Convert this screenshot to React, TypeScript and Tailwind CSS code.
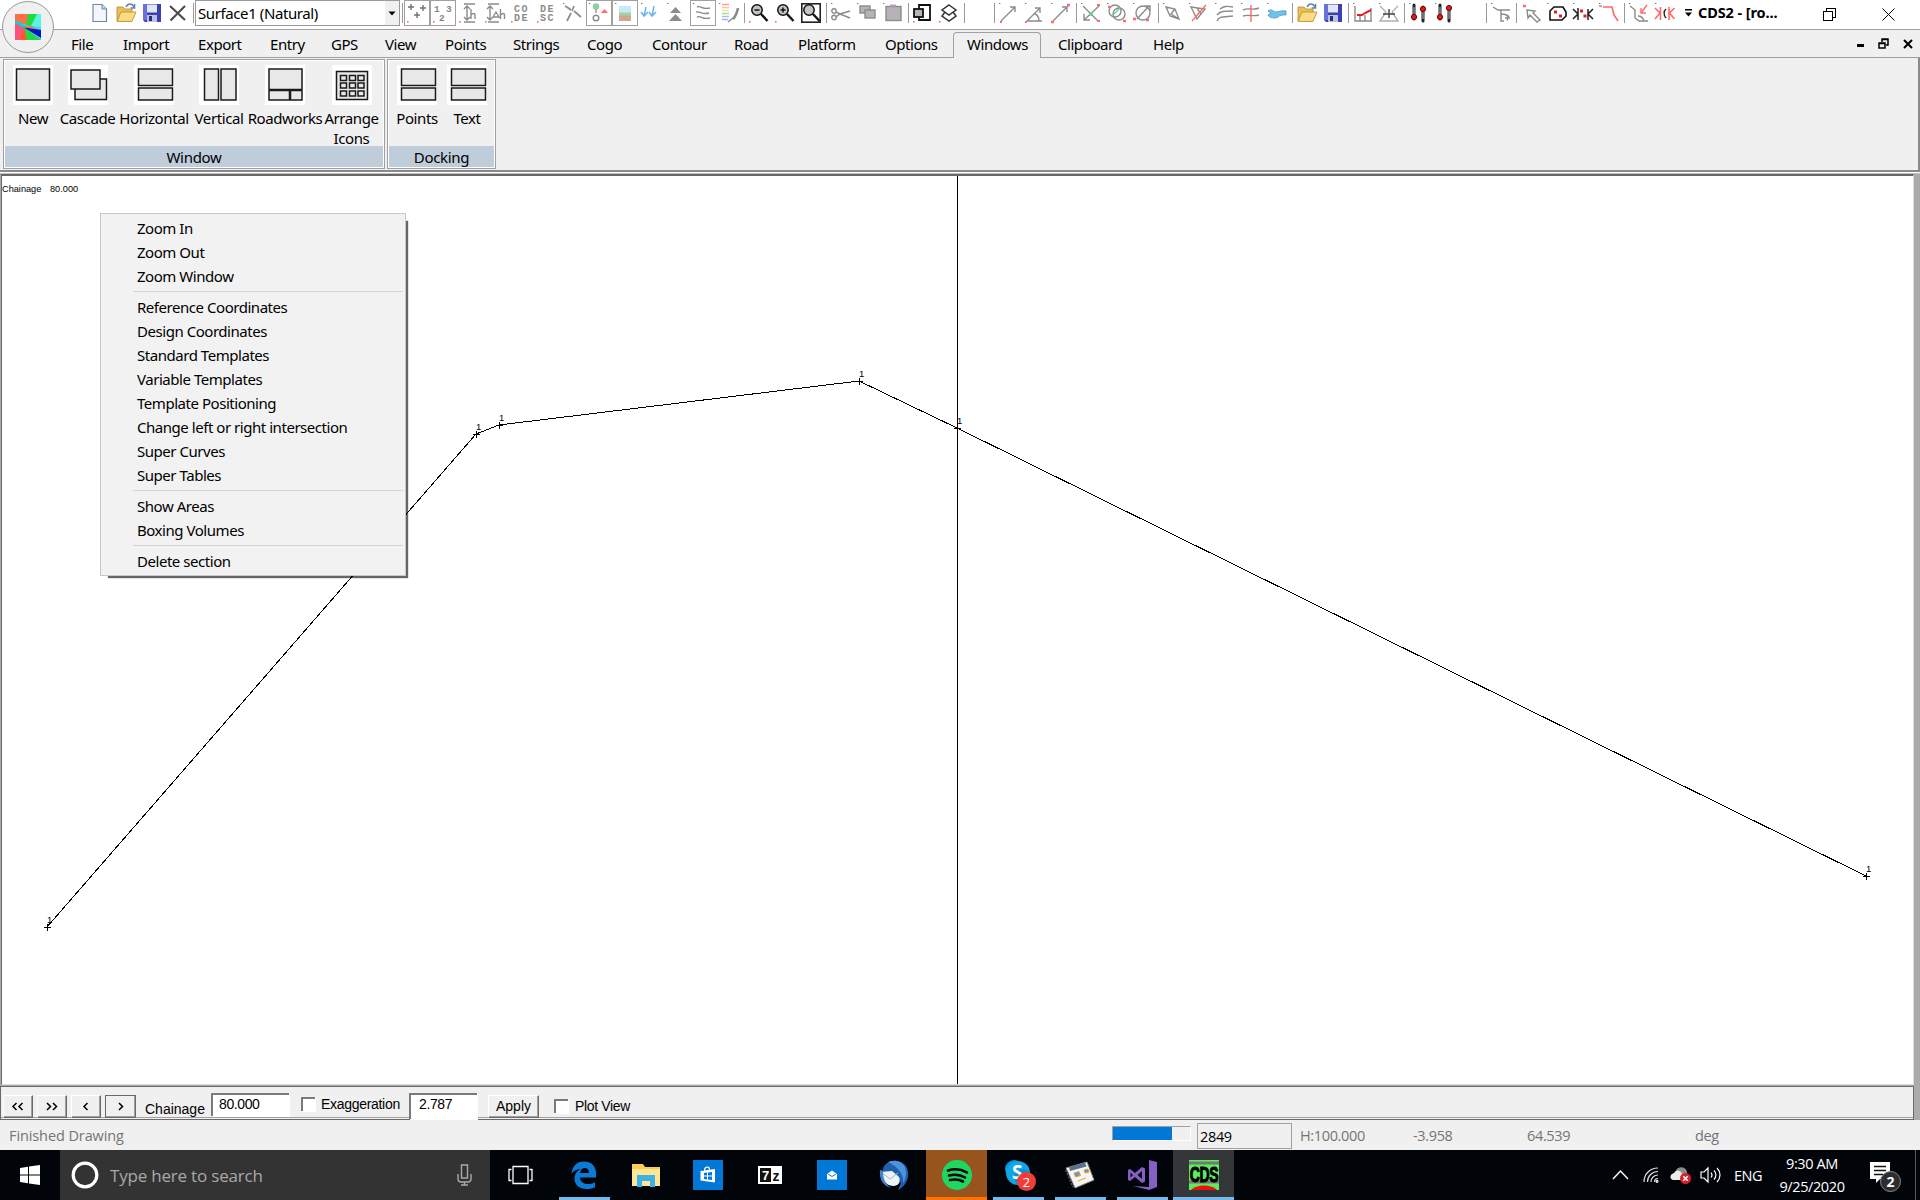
import type { ReactNode } from "react";
import { clsx } from "clsx";

interface BoxProps {
  children?: ReactNode;
  className?: string;
}

const RED = "#ff6b6b";
const GRAY = "#8c8c8c";

/* ---------- quick access toolbar ---------- */

const Tool = ({ children, boxed, dot }: { children?: ReactNode; boxed?: boolean; dot?: "top" | "bottom" }) => (
  <div className={clsx("flex h-[26px] w-[26px] shrink-0 items-center justify-center", boxed && "outline -outline-offset-1 outline-[#a0a0a0]")}>
    <svg className="overflow-visible" width="20" height="20" viewBox="0 0 20 20" fill="none" stroke={GRAY} strokeWidth="1.4">
      {dot === "bottom" && <rect x="0" y="18" width="1.6" height="1.6" fill={RED} stroke="none" />}
      {dot === "top" && <rect x="0" y="0" width="1.4" height="1" fill="#777" stroke="none" />}
      {children}
    </svg>
  </div>
);

const Sep = () => (
  <div className="flex h-[26px] w-1 shrink-0 items-center justify-center">
    <div className="h-5 w-px bg-[#9a9a9a]" />
  </div>
);

const OpenIcon = () => (
  <g stroke="#b98a2c" strokeWidth="0.8">
    <path d="M1 18V4h6l2 2h7v12z" fill="#e9bf5a" />
    <path d="M1 18.4 5 9h15l-4 9.4z" fill="#fbdc82" />
    <path d="M10 4c2-4 6-4 8 0M18.600 1v4h-4" stroke="#5c83a8" strokeWidth="1.4" />
  </g>
);

const SaveIcon = () => (
  <g stroke="none">
    <path d="M1 1h18v18H3l-2-2z" fill="#3c3fae" />
    <path d="M1 1h4v16H1z" fill="#6a70d8" />
    <rect x="5" y="1.500" width="10" height="8" fill="#dfe6f8" />
    <rect x="5" y="12" width="10" height="7" fill="#b9c2e6" />
    <rect x="7" y="13" width="3" height="5" fill="#2b2d7a" />
  </g>
);

const SmallText = ({ a, b }: { a: string; b: string }) => (
  <g fill="#8c8c8c" stroke="none" fontFamily="Liberation Mono, monospace" fontSize="10" fontWeight="700" letterSpacing="1.500">
    <text x="3" y="8.500">{a}</text>
    <text x="3" y="17.500">{b}</text>
  </g>
);

const Magnifier = ({ sign }: { sign?: string }) => (
  <g stroke="#111">
    <circle cx="8" cy="7" r="5.200" fill="#c4c4c4" strokeWidth="1.500" />
    <path d="m12 11 6.500 7" strokeWidth="2.400" />
    {sign && <path d={sign} strokeWidth="1.500" />}
  </g>
);

const Thermometers = ({ flip }: { flip?: boolean }) => (
  <g>
    <path d="M5 2v14M14 4v14" stroke="#222" strokeWidth="3" strokeLinecap="round" />
    <path d="M5 4v11M14 6v10" stroke="#bbb" strokeWidth="1" />
    <circle cx="5" cy="14" r="2.600" fill="#d81e1e" stroke="#700" strokeWidth="1" />
    <circle cx="14" cy={flip ? 5 : 6} r="2.600" fill="#d81e1e" stroke="#700" strokeWidth="1" />
  </g>
);

const TitleBar = () => (
  <div className="flex h-[29px] bg-white pl-[87px]">
    <Tool>
      <path d="M3 1.500h9l4.500 4.500v12.500H3z" fill="#f3f7fc" stroke="#7189a5" strokeWidth="1.200" />
      <path d="M12 1.500v4.500h4.500" stroke="#7189a5" fill="#c9d8ea" strokeWidth="1" />
    </Tool>
    <Tool><OpenIcon /></Tool>
    <Tool><SaveIcon /></Tool>
    <Tool><path d="m2 3 15 14M17 3 2.500 17.500" stroke="#4b4b4b" strokeWidth="2.100" /></Tool>
    <Sep />
    <div className="flex h-[26px] w-[205px] shrink-0 items-center border border-[#9a9a9a] bg-white pl-0.5">
      <span className="flex-1 whitespace-nowrap text-[15px] leading-6 tracking-[-0.4px]">Surface1 (Natural)</span>
      <span className="flex h-full w-[14px] items-center justify-center bg-[#f0f0f0]">
        <svg width="8" height="5" viewBox="0 0 8 5"><path d="M0.500 0.500h7L4 4.500z" /></svg>
      </span>
    </div>
    <Sep />
    <Tool boxed dot="bottom"><path d="M1 4h6M4 1v6M13 5h6M16 2v6M7 12h6M10 9v6" stroke="#707070" /></Tool>
    <Tool boxed dot="bottom">
      <g fill="#858585" stroke="none" fontFamily="Liberation Mono, monospace" fontSize="9.500" fontWeight="700">
        <text x="1" y="9">1</text>
        <text x="13" y="9">3</text>
        <text x="6" y="17.500">2</text>
      </g>
    </Tool>
    <Tool dot="bottom">
      <path d="M5 1h11M5 19h11M8 3v14M5 6l3-3 3 3M5 14l3 3 3-3M12 6v10M12 12c2-2 4-2 4 0v4" />
    </Tool>
    <Tool dot="bottom">
      <path d="M3 1h11M3 19h11M5 3v14M2 6l3-3 3 3M2 14l3 3 3-3M8 14l3-5 3 5zM15.500 6v10M15.500 12c2-2 4-2 4 0v4" />
    </Tool>
    <Tool dot="bottom"><SmallText a="CO" b="DE" /></Tool>
    <Tool dot="bottom"><SmallText a="DE" b="SC" /></Tool>
    <Tool dot="top"><path d="m2 3 5 3M11 3 9 8M8 10 4 18M11 8l7 6M5 5l3 2" strokeWidth="1.700" /></Tool>
    <Tool boxed dot="top">
      <circle cx="7" cy="3.500" r="3.200" fill="#8fcfa0" stroke="none" />
      <path d="M7 6v4" stroke="#b09060" />
      <circle cx="7" cy="15" r="2.800" />
      <path d="m12 10 3.500-4 3.500 4z" fill={RED} stroke="none" />
    </Tool>
    <Tool boxed dot="top">
      <g stroke="none">
        <rect x="4" y="3" width="12" height="15" fill="#c7e9f7" />
        <rect x="4" y="12" width="12" height="6" fill="#cfa893" />
        <rect x="4" y="9.500" width="12" height="3" fill="#9fd3a5" />
      </g>
    </Tool>
    <Tool dot="top"><path d="M5 4 3 13M0 9l3 4 4-4M13 3l-2 10M8 9l3 4 4-4" stroke="#6ab4ee" strokeWidth="1.500" /></Tool>
    <Tool dot="top"><path d="m3 10 5.500-6L14 10zM2 18l6.500-7 6.500 7z" fill="#8c8c8c" stroke="none" /></Tool>
    <Tool boxed dot="top">
      <path d="M4 4c4-2 5 3 13 1M3 9c4-1 6 3 13 1M4 14c4-2 5 3 13 1" />
    </Tool>
    <Tool dot="top">
      <g strokeWidth="1.500">
        <path d="M3 1.500h7" stroke="#ff9aa0" />
        <path d="M3 4.500h7" stroke="#ffc4a0" />
        <path d="M3 7.500h7" stroke="#f0e68c" />
        <path d="M3 10.500h7" stroke="#a0e0a0" />
        <path d="M3 13.500h7" stroke="#90c8f0" />
        <path d="M3 16.500h6" stroke="#c0a0f0" />
        <path d="M19 5c-1 5-2 8-5 11" stroke="#888" strokeWidth="2.500" />
        <path d="m14 15-5 4" stroke="#888" />
      </g>
    </Tool>
    <Sep />
    <Tool dot="bottom"><Magnifier sign="M5.500 7h5" /></Tool>
    <Tool dot="bottom"><Magnifier sign="M5.500 7h5M8 4.500v5" /></Tool>
    <Tool>
      <rect x="0.800" y="0.800" width="18.400" height="18.400" stroke="#222" strokeWidth="1.600" />
      <Magnifier />
    </Tool>
    <Sep />
    <Tool dot="top">
      <circle cx="3" cy="8" r="2.200" />
      <circle cx="3" cy="14.500" r="2.200" />
      <path d="m5 9 4 2 10 4M5 14l4-3 10-3" />
    </Tool>
    <Tool dot="top">
      <rect x="3" y="3" width="10" height="7" fill="#b4b4b4" />
      <rect x="8" y="7" width="10" height="8" fill="#b4b4b4" />
    </Tool>
    <Tool dot="top">
      <rect x="3" y="3.500" width="15" height="14" fill="#b4b4b4" />
      <path d="M7 2.500h6" stroke="#c49ac8" strokeWidth="2" />
    </Tool>
    <Sep />
    <Tool dot="bottom">
      <path d="M6 2h11v15H6z" stroke="#111" strokeWidth="1.800" />
      <rect x="1" y="6" width="9" height="8" fill="#b4b4b4" stroke="#111" strokeWidth="1.800" />
    </Tool>
    <Tool dot="bottom">
      <path d="m10 2 7 5-7 5-7-5zM6 9l-3 4 7 5 7-5-3-4" stroke="#333" strokeWidth="1.500" />
    </Tool>
    <Sep />
    <div className="w-[26px] shrink-0" />
    <Sep />
    <Tool dot="top"><path d="M2 18 16 4M11 4h5v5" /><path d="M1 19h2" stroke={RED} strokeWidth="2" /></Tool>
    <Tool dot="top"><path d="M2 18 15 5M10 5h5v5M2 18h15M10 11c3 1 4 4 4 7" /><path d="M0 19h2" stroke={RED} strokeWidth="2" /></Tool>
    <Tool dot="top"><path d="M2 18 17 3M11 4h5v5" /><path d="M0 19h3M16 2h3" stroke={RED} strokeWidth="2.500" /></Tool>
    <Sep />
    <Tool dot="top">
      <path d="M2 3l15 15M18 3 3 17M3 11v6h6" />
      <circle cx="10" cy="11" r="2" fill="#6fd08c" stroke="none" />
      <path d="M16 2h3M16 18h3" stroke={RED} strokeWidth="2.200" />
    </Tool>
    <Tool dot="top">
      <circle cx="8" cy="8" r="6" />
      <circle cx="12" cy="11" r="6" />
      <path d="m6 12 7-7" stroke="#6fd08c" />
      <path d="M1 4h2M16 18h3" stroke={RED} strokeWidth="2.400" />
    </Tool>
    <Tool dot="top">
      <circle cx="10" cy="10" r="7" />
      <path d="M4 16 16 3M12 3h5v5" />
      <path d="M0 16h3M13 17h3" stroke={RED} strokeWidth="2.400" />
    </Tool>
    <Sep />
    <Tool dot="top"><path d="m3 4 9 2 4 10-9-3zM3 4l4 9M12 6l-4 5 8 5" /></Tool>
    <Tool dot="top"><path d="m2 4 14 2-8 10zM8 5l4 6" /><path d="M17 2 3 18" stroke={RED} /></Tool>
    <Tool dot="top"><path d="M2 18c2-5 6-4 16-5M2 12c3-4 7-4 16-4M5 6c4-3 7-3 13-2" /></Tool>
    <Tool dot="top"><path d="M2 7c6-3 9 1 16-2M2 13c6-2 9 1 16-1" /><path d="M10 2v17" stroke={RED} /></Tool>
    <Tool dot="top">
      <path d="M1 8c3-3 6 1 8 1s5-2 10-1v4c-4 0-6 0-8 2s-9 1-10-2l3-2z" fill="#6cc3ee" stroke="#4a9ac0" strokeWidth="0.800" />
    </Tool>
    <Sep />
    <Tool><OpenIcon /></Tool>
    <Tool><SaveIcon /></Tool>
    <Sep />
    <Tool dot="top">
      <path d="M2 3v15h17M7 18v-6M12 18v-6M18 18V5" />
      <path d="M4 12h5l3-2 6-3" stroke="#e02020" strokeWidth="2" />
    </Tool>
    <Tool dot="top"><path d="m1 3 6 6M19 3l-6 6M7 9l-6 9h18l-6-9" stroke="#b0b0b0" /><path d="M4 11h12M10 6v9" stroke="#444" /></Tool>
    <Sep />
    <Tool dot="top"><Thermometers /></Tool>
    <Tool dot="top"><Thermometers flip /></Tool>
    <div className="w-[26px] shrink-0" />
    <Sep />
    <Tool dot="top"><path d="m2 4 5 3h12M10 7v11h3M10 11c3 0 6 0 8 3" /><path d="M14 15h5M16.500 12.500v5" /></Tool>
    <Sep />
    <Tool><path d="M2 3h3" stroke={RED} strokeWidth="2.500" /><path d="m6 7 8 1-2 2 7 7-3 2-7-7-2 3z" /></Tool>
    <Tool dot="top">
      <path d="M3 17V8l4-4h9l3 5v4l-4 4z" stroke="#111" strokeWidth="1.600" />
      <path d="M7 9h3M12 13h3" stroke="#e02020" strokeWidth="3" />
    </Tool>
    <Tool dot="top">
      <path d="M0 6l5 5-5 5M5 5v12M15 6v11M20 6l-5 5 5 5" stroke="#222" strokeWidth="1.500" />
      <path d="M7 8h3M10.500 13h3" stroke="#e02020" strokeWidth="2.800" />
    </Tool>
    <Tool dot="top"><path d="M0 3h3" /><path d="M4 4h9l2 8 4 6" stroke={RED} strokeWidth="1.700" /></Tool>
    <Sep />
    <Tool dot="top"><path d="m1 3 5 4v8l4 3h9M9 13c3 0 5 2 6 5" /><path d="m18 2-6 8M12 5v5h5" stroke={RED} /></Tool>
    <Tool dot="top">
      <path d="m0 5 5 5-5 6M5.500 4v13M14 4v13M19.500 5l-5 5 5 6" stroke={RED} strokeWidth="1.600" />
      <path d="M11 6c-2.500 2-2.500 6 0 9" stroke="#222" />
    </Tool>
    <div className="flex h-[26px] w-[20px] shrink-0 items-center pl-[7px]">
      <svg width="7" height="8" viewBox="0 0 7 8"><path d="M0 0h7v1.500H0zM0 3.500h7L3.500 7.500z" /></svg>
    </div>
    <span className="w-[83px] shrink-0 whitespace-nowrap pt-px text-[14.5px] font-bold leading-[23px] tracking-[-0.1px]">CDS2 - [ro...</span>
    <div className="flex flex-1 items-center pl-[42px]">
      <svg width="13" height="13" viewBox="0 0 13 13" fill="none" stroke="#000" shapeRendering="crispEdges">
        <path d="M0.500 3.500h9v9h-9zM3.500 3V0.500h9v9H10" />
      </svg>
      <svg className="ml-[46px]" width="13" height="13" viewBox="0 0 13 13" stroke="#000"><path d="m0.500 0.500 12 12M12.500 0.500l-12 12" /></svg>
    </div>
  </div>
);

/* ---------- menu tabs ---------- */

const TABS = [
  { label: "File", cls: "w-[52px]" },
  { label: "Import", cls: "w-[75px]" },
  { label: "Export", cls: "w-[72px]" },
  { label: "Entry", cls: "w-[61px]" },
  { label: "GPS", cls: "w-[54px]" },
  { label: "View", cls: "w-[60px]" },
  { label: "Points", cls: "w-[68px]" },
  { label: "Strings", cls: "w-[74px]" },
  { label: "Cogo", cls: "w-[65px]" },
  { label: "Contour", cls: "w-[82px]" },
  { label: "Road", cls: "w-[64px]" },
  { label: "Platform", cls: "w-[87px]" },
  { label: "Options", cls: "w-[82px]" },
  { label: "Windows", cls: "w-[88px]", active: true },
  { label: "Clipboard", cls: "w-[95px] ml-[3px]" },
  { label: "Help", cls: "w-[61px]" },
];

const MenuTabs = () => (
  <div className="flex h-[29px] border-b border-t border-[#a0a0a0] bg-[#f0f0f0] pl-[57px]">
    {TABS.map((tab) => (
      <div
        key={tab.label}
        className={clsx(
          "shrink-0 whitespace-nowrap text-[15px] tracking-[-0.45px]",
          tab.cls,
          tab.active
            ? "-mb-px mt-0.5 h-[26px] rounded-t border border-b-0 border-[#a0a0a0] bg-[#f0f0f0] pl-[13px] leading-[22px]"
            : "pl-[14px] leading-[28px]"
        )}
      >
        {tab.label}
      </div>
    ))}
    <div className="flex flex-1 items-center justify-end gap-[14px] pr-[7px]">
      <span className="mt-1 h-[3px] w-[7px] bg-black" />
      <svg width="11" height="11" viewBox="0 0 11 11" fill="none" stroke="#000" strokeWidth="1.500">
        <path d="M1 5h6v5H1zM1 5.500h6M4 4V1h6v6H8M4 1.500h6" />
      </svg>
      <svg width="10" height="10" viewBox="0 0 10 10" stroke="#000" strokeWidth="2"><path d="m1 1 8 8M9 1 1 9" /></svg>
    </div>
  </div>
);

/* ---------- ribbon ---------- */

const WindowIcon = ({ children }: BoxProps) => (
  <svg className="shrink-0 bg-white" width="40" height="40" viewBox="0 0 40 40" fill="#e8e8e8" stroke="#1a1a1a" strokeWidth="1.500">
    {children}
  </svg>
);

const SplitIcon = () => (
  <WindowIcon>
    <path d="M4.500 4h34v16.500h-34zM4.500 23h34v12h-34z" />
  </WindowIcon>
);

const RibbonButton = ({ icon, label, className }: { icon: ReactNode; label: string; className: string }) => (
  <div className={clsx("flex shrink-0 flex-col items-center pt-1", className)}>
    {icon}
    <span className="mt-[3px] text-center text-[15px] leading-5 tracking-[-0.4px]">{label}</span>
  </div>
);

const RibbonGroup = ({ title, children, className }: BoxProps & { title: string }) => (
  <div className={clsx("flex h-[110px] shrink-0 flex-col border border-[#a0a0a0] p-px shadow-[inset_0_0_0_1px_#fff]", className)}>
    <div className="flex h-[85px] shrink-0 pl-[3px]">{children}</div>
    <div className="h-[21px] shrink-0 bg-[#bfcddb] text-center text-[15px] leading-[22px] tracking-[-0.3px]">{title}</div>
  </div>
);

const Ribbon = () => (
  <div className="flex h-[114px] border-b-2 border-r-2 border-[#8a8a8a] bg-[#f0f0f0] pl-[3px] pt-px">
    <RibbonGroup title="Window" className="w-[382px]">
      <RibbonButton className="w-[50px]" label="New" icon={<WindowIcon><path d="M3.500 4h33v31h-33z" /></WindowIcon>} />
      <RibbonButton
        className="w-[59px]"
        label="Cascade"
        icon={<WindowIcon><path d="M7 14h31.500v20.500H7z" /><path d="M3 5h29v19H3z" /></WindowIcon>}
      />
      <RibbonButton className="w-[74px]" label="Horizontal" icon={<SplitIcon />} />
      <RibbonButton
        className="w-[56px]"
        label="Vertical"
        icon={<WindowIcon><path d="M5.500 4h14v31h-14zM22 4h15v31H22z" /></WindowIcon>}
      />
      <RibbonButton
        className="w-[76px]"
        label="Roadworks"
        icon={<WindowIcon><path d="M4 4h33v31H4z" /><path d="M4 25h33M25 25v10" strokeWidth="2.500" /></WindowIcon>}
      />
      <RibbonButton
        className="w-[57px]"
        label="Arrange Icons"
        icon={
          <WindowIcon>
            <path d="M4.500 6.500h31v28h-31z" />
            <path d="M8.500 10.500h6v5h-6zM17.500 10.500h6v5h-6zM26 10.500h6v5h-6zM8.500 18h6v5h-6zM17.500 18h6v5h-6zM26 18h6v5h-6zM8.500 26h6v5h-6zM17.500 26h6v5h-6zM26 26h6v5h-6z" />
          </WindowIcon>
        }
      />
    </RibbonGroup>
    <RibbonGroup title="Docking" className="ml-[2px] w-[109px]">
      <RibbonButton className="w-[50px]" label="Points" icon={<SplitIcon />} />
      <RibbonButton className="w-[50px]" label="Text" icon={<SplitIcon />} />
    </RibbonGroup>
  </div>
);

/* ---------- cross section ---------- */

// section vertices in canvas pixels
const POINTS = [
  [45, 751],
  [474, 258],
  [497, 249],
  [857, 205],
  [955, 252],
  [1864, 700],
];

const MENU = [
  ["Zoom In", "Zoom Out", "Zoom Window"],
  [
    "Reference Coordinates",
    "Design Coordinates",
    "Standard Templates",
    "Variable Templates",
    "Template Positioning",
    "Change left or right intersection",
    "Super Curves",
    "Super Tables",
  ],
  ["Show Areas", "Boxing Volumes"],
  ["Delete section"],
];

const ContextMenu = () => (
  <div className="absolute left-[98px] top-[37px] h-[363px] w-[306px] border border-[#c8c8c8] bg-[#f2f2f2] py-[3px] shadow-[5px_5px_1px_-3px_rgba(0,0,0,0.6)]">
    {MENU.map((group, i) => (
      <div key={i}>
        {i > 0 && <div className="mb-1 ml-8 mr-0.5 mt-0.5 h-px bg-[#d4d4d4]" />}
        {group.map((item) => (
          <div key={item} className="h-6 whitespace-nowrap pl-9 text-[15px] leading-[23px] tracking-[-0.46px]">
            {item}
          </div>
        ))}
      </div>
    ))}
  </div>
);

const SectionView = () => (
  <div className="flex h-[912px] bg-[#ababab] pl-px">
    <div className="relative h-[911px] w-[1913px] border-b border-l border-r border-t-2 border-[#686868] border-b-[#dcdcdc] border-r-[#dcdcdc] bg-white">
      <svg className="block" width="1911" height="908" viewBox="0 0 1911 908" shapeRendering="crispEdges">
        <path d="M955.500 0v908" stroke="#000" />
        <polyline points={POINTS.map((p) => p.join(",")).join(" ")} fill="none" stroke="#000" />
        {POINTS.map(([x, y]) => (
          <g key={x}>
            <path d={`M${x - 3} ${y + 0.5}h7M${x + 0.5} ${y - 3}v7`} stroke="#000" />
            <text x={x} y={y - 4} fontSize="9.500" fontFamily="Liberation Sans, Arial, sans-serif">1</text>
          </g>
        ))}
        <g fontSize="9.200" fontFamily="Liberation Sans, Arial, sans-serif">
          <text x="0" y="16">Chainage</text>
          <text x="48" y="16">80.000</text>
        </g>
      </svg>
      <ContextMenu />
    </div>
  </div>
);

/* ---------- section toolbar ---------- */

const RaisedButton = ({ children, className }: BoxProps) => (
  <div
    className={clsx(
      "flex h-[23px] shrink-0 items-center justify-center border border-b-[#696969] border-l-white border-r-[#696969] border-t-white shadow-[inset_-1px_-1px_0_#a0a0a0]",
      className
    )}
  >
    {children}
  </div>
);

const Sunken = ({ children, className }: BoxProps) => (
  <div
    className={clsx(
      "shrink-0 border-l-2 border-t-2 border-l-[#7a7a7a] border-t-[#7a7a7a] bg-white shadow-[1px_1px_0_#fff]",
      className
    )}
  >
    {children}
  </div>
);

// the step buttons use short drawn chevrons
const Step = ({ d, className }: { d: string; className?: string }) => (
  <RaisedButton className={clsx("mt-2", className)}>
    <svg width="14" height="9" viewBox="0 0 14 9" fill="none" stroke="#000" strokeWidth="1.500">
      <path d={d} />
    </svg>
  </RaisedButton>
);

const SectionToolbar = () => (
  <div className="flex h-[34px] bg-[#ababab]">
    <div className="flex w-[1914px] items-start border-l border-r border-t border-[#696969] bg-[#f0f0f0] pl-[2px] font-['Liberation_Sans',Arial,sans-serif] text-[14px] tracking-[-0.4px] shadow-[inset_0_-1px_0_#696969,inset_0_-2px_0_#f0f0f0,inset_0_-3px_0_#a0a0a0]">
      <Step className="w-[30px]" d="M5.500 1 2 4.500 5.500 8M11.500 1 8 4.500 11.500 8" />
      <Step className="ml-1 w-[30px]" d="M2 1l3.500 3.500L2 8M8 1l3.500 3.500L8 8" />
      <Step className="ml-1 w-[30px]" d="M8.500 1 5 4.500 8.500 8" />
      <Step className="ml-1 w-[31px] outline -outline-offset-1 outline-[#696969]" d="M5 1l3.500 3.500L5 8" />
      <span className="ml-[9px] w-[66px] pt-[12px] tracking-[0px]">Chainage</span>
      <Sunken className="mt-[6px] h-[23px] w-[78px] pl-[6px] leading-[19px]">80.000</Sunken>
      <Sunken className="ml-[12px] mt-[10px] h-[14px] w-[14px]" />
      <span className="ml-[6px] w-[82px] pt-[7px] tracking-[-0.3px]">Exaggeration</span>
      <Sunken className="ml-[6px] mt-[6px] h-[26px] w-[68px] pl-[8px] leading-[19px]">2.787</Sunken>
      <RaisedButton className="ml-[11px] mt-2 w-[51px] tracking-[0px]">Apply</RaisedButton>
      <Sunken className="ml-[15px] mt-[12px] h-[14px] w-[14px]" />
      <span className="ml-[7px] pt-[9px] tracking-[-0.35px]">Plot View</span>
    </div>
  </div>
);

const StatusBar = () => (
  <div className="flex h-[30px] items-center bg-[#f0f0f0] pt-px font-['Open_Sans',sans-serif] text-[14.5px] tracking-[-0.35px] text-[#757575]">
    <span className="w-[1112px] pl-[9px] tracking-[-0.1px]">Finished Drawing</span>
    <div className="-mt-1 h-[15px] w-[79px] border border-b-white border-l-[#a0a0a0] border-r-white border-t-[#a0a0a0]">
      <div className="h-full w-[59px] bg-[#0078d7]" />
    </div>
    <div className="ml-[6px] h-[26px] w-[95px] border border-[#a0a0a0] pl-0.5 leading-[25px] text-black">2849</div>
    <span className="ml-[8px] w-[113px]">H:100.000</span>
    <span className="w-[114px]">-3.958</span>
    <span className="w-[168px]">64.539</span>
    <span>deg</span>
  </div>
);

/* ---------- taskbar ---------- */

const TaskApp = ({ children, running, className }: BoxProps & { running?: boolean }) => (
  <div className={clsx("flex h-full w-[62px] shrink-0 flex-col items-center", className)}>
    <div className="flex flex-1 items-center pt-[3px]">{children}</div>
    <div className={clsx("h-[3px] w-[51px]", running && "bg-[#76b9ed]")} />
  </div>
);

const Taskbar = () => (
  <div className="flex h-[50px] bg-[#010409] font-['Open_Sans',sans-serif] text-white">
    <div className="flex w-[60px] items-center justify-center">
      <svg width="20" height="20" viewBox="0 0 20 20" fill="#fff">
        <path d="M0 3l8-1.200v7.700H0zM9 1.600 20 0v9.500H9zM0 10.500h8v7.700L0 17zM9 10.500h11V20L9 18.400z" />
      </svg>
    </div>
    <div className="flex w-[430px] items-center bg-[#333334] pl-[11px]">
      <svg width="28" height="28" viewBox="0 0 28 28"><circle cx="14" cy="14" r="11.800" fill="none" stroke="#fff" strokeWidth="3.200" /></svg>
      <span className="ml-[11px] flex-1 pt-px text-[17px] tracking-[-0.2px] text-[#a9a9a9]">Type here to search</span>
      <svg className="mr-[18px]" width="15" height="22" viewBox="0 0 15 22" fill="none" stroke="#a9a9a9" strokeWidth="1.400">
        <path d="M4.500 1h6v13h-6zM1 10v5c0 2 1 3 3 3h7c2 0 3-1 3-3v-5M7.500 18v3M4 21h7" />
      </svg>
    </div>
    <div className="flex w-[60px] items-center justify-center">
      <svg width="25" height="20" viewBox="0 0 25 20" fill="none" stroke="#fff" strokeWidth="1.300">
        <path d="M5 1.500h15v17H5zM3.500 4.500H1v11h2.500M21.500 4.500H24v11h-2.500" />
      </svg>
    </div>
    <TaskApp className="ml-[3px]" running>
      <svg width="26" height="28" viewBox="0 0 26 28" fill="#0b7bd8">
        <path d="M0.500 13C1 5 6 0.500 13 0.500 21 0.500 25 6 25 12v4.500H9c0 4 3.500 6.500 8 6.500 3 0 5.500-.8 7-1.800v5C22 27.300 19 28 15.500 28 8 28 3.500 23.500 3.500 17.500c0-4.500 2.500-8 6.500-9.500-5 .2-8 2-9.500 5zM9.200 12H18c0-3-1.500-5-4.200-5S9.500 9 9.200 12z" />
      </svg>
    </TaskApp>
    <TaskApp>
      <svg width="28" height="24" viewBox="0 0 28 24">
        <path d="M0 1h11l2 3h15v19H0z" fill="#f9cd57" />
        <path d="M0 6h28v17H0z" fill="#ffe694" />
        <path d="M5 24V12h18v12h-5v-6h-8v6z" fill="#3db2e6" />
      </svg>
    </TaskApp>
    <TaskApp>
      <svg width="30" height="30" viewBox="0 0 30 30">
        <path fill="#0078d7" d="M0 0h30v30H0z" />
        <path d="M7.500 11 22 9v13.500L7.500 20.500zM11 11V9.500c0-3.500 6-4 6-.5v1.500h-1.300V9c0-2-3.400-1.500-3.400.5V11z" fill="#fff" />
        <path d="m11 13 3-.4v2.900h-3zM15 12.500l4-.5v3.500h-4zM11 16.500h3v2.900l-3-.4zM15 16.500h4V20l-4-.5z" fill="#0078d7" />
      </svg>
    </TaskApp>
    <TaskApp>
      <svg width="24" height="18" viewBox="0 0 24 18">
        <path fill="#fff" d="M0 0h24v18H0z" />
        <path fill="#111" d="M2 2h11v14H2z" />
        <g fontFamily="Liberation Sans, sans-serif" fontWeight="700">
          <text x="4" y="14" fontSize="13" fill="#fff">7</text>
          <text x="14.500" y="15" fontSize="14" fill="#111">z</text>
        </g>
      </svg>
    </TaskApp>
    <TaskApp>
      <svg width="30" height="30" viewBox="0 0 30 30">
        <path fill="#0078d7" d="M0 0h30v30H0z" />
        <path d="M10 14l5-3.500 5 3.500v5.500H10z" fill="#fff" />
        <path d="m11 14 4 2.500 4-2.500" stroke="#0078d7" fill="none" />
      </svg>
    </TaskApp>
    <TaskApp>
      <svg width="30" height="30" viewBox="0 0 30 30">
        <path d="M5 6C10-1 22-1 27 6c5 9 1 20-8 24 2-4 3-6 2-10L3 12z" fill="#1f5fae" />
        <path d="M9 2c8-3 14 0 17 5 2 6 1 12-2 16 1-9-5-16-15-21z" fill="#4b93dc" />
        <path d="M2 12c2 10 6 14 13 14 5-1 7-4 5-9l-7-6z" fill="#eef2f7" />
        <path d="m2 12 9 7 8-6" fill="none" stroke="#a7b5c6" />
        <path d="M1 10c-1 9 3 16 11 18-6-4-8-10-8-17z" fill="#3f86cf" />
      </svg>
    </TaskApp>
    <div className="ml-px flex h-full w-[61px] shrink-0 items-center justify-center border-b-[3px] border-[#ff7200] bg-[#98541d] pt-[3px]">
      <svg width="30" height="30" viewBox="0 0 30 30">
        <circle cx="15" cy="15" r="15" fill="#1ed760" />
        <path d="M6 10.500c6-2 13-1.500 19 2M7 15.500c6-1.500 11-1 16 2M8 20c5-1 9-.8 13 1.500" fill="none" stroke="#000" strokeWidth="2.600" strokeLinecap="round" />
      </svg>
    </div>
    <TaskApp running>
      <svg className="ml-[5px]" width="34" height="34" viewBox="0 0 34 34">
        <circle cx="10" cy="11" r="9" fill="#0a8fd8" />
        <circle cx="14" cy="15" r="12" fill="#12a5e8" />
        <circle cx="19" cy="20" r="9" fill="#0a8fd8" />
        <text x="8" y="21" fontSize="19" fontWeight="700" fill="#fff">S</text>
        <circle cx="22.500" cy="23.500" r="9.500" fill="#f03e36" />
        <text x="18.500" y="28.500" fontSize="13.500" fill="#fff">2</text>
      </svg>
    </TaskApp>
    <TaskApp running>
      <svg width="30" height="28" viewBox="0 0 30 26">
        <path d="M1 6 22 0l7 18-19 8z" fill="#f4f4f2" stroke="#888" />
        <path d="M4 5 20 .5l1.500 4L5 9z" fill="#5b6f8f" />
        <path d="m9 11 5-1.500 1.500 4L10.500 15zM19 8l4-1 1 3-4 1zM13 19l8-3" fill="#4f9de0" stroke="#f0a030" />
        <path d="M1 8 8 25" stroke="#555" strokeWidth="2" strokeDasharray="2 1.500" />
      </svg>
    </TaskApp>
    <TaskApp running>
      <svg className="ml-px" width="30" height="30" viewBox="0 0 30 30" fill="#865fc5">
        <path d="m21 0 8 2v25l-8 3L5 26l16 1z" />
        <path d="m0 10 2-1 5 4 7-6 3 1.500v13L14 23l-7-6-5 4-2-1zm2.500 2.500v5l2.500-2.500zm7 2.500 4.500 4v-8z" fillRule="evenodd" />
      </svg>
    </TaskApp>
    <div className="flex h-full w-[61px] shrink-0 items-center justify-center border-b-[3px] border-[#76b9ed] bg-[#343639] pt-[3px]">
      <svg className="overflow-visible" width="30" height="30" viewBox="0 0 30 30">
        <path fill="#5bef5b" d="M0 0h30v30H0z" />
        <path d="M0 3h30M0 22h30" stroke="#777" strokeWidth="3" />
        <g transform="scale(0.640 1)">
          <text x="1" y="22" fontSize="22" fontWeight="700" fontFamily="Liberation Sans, sans-serif" letterSpacing="-0.500" fill="#000" stroke="#000">CDS</text>
        </g>
        <path d="M2 30c5-6 21-6 26 0z" fill="#f01010" />
      </svg>
    </div>
    <div className="flex flex-1 items-center justify-end">
      <svg width="17" height="10" viewBox="0 0 17 10" fill="none" stroke="#fff" strokeWidth="1.400"><path d="m1 9 7.500-8L16 9" /></svg>
      <svg className="ml-[14px]" width="16" height="16" viewBox="0 0 16 16" fill="none" stroke="#ddd" strokeWidth="1.200">
        <path d="M1 15C1 7 7 1 15 1M4.500 15C4.500 9 9 4.500 15 4.500M8 15c0-4 3-7 7-7M11.500 15c0-2 1.500-3.500 3.500-3.500" />
        <circle cx="14" cy="14.300" r="1" fill="#fff" />
      </svg>
      <svg className="ml-[11px]" width="21" height="18" viewBox="0 0 21 18">
        <path d="M6 5c1-5 10-5 11 1l1 7H8z" fill="#8b8b8b" />
        <path d="M3 14c-4-1-3-6 1-7 2-4 7-3 8 1l1 6z" fill="#ececec" />
        <circle cx="15.500" cy="12.500" r="5.500" fill="#d8202a" />
        <path d="m13.300 10.300 4.400 4.400m0-4.400-4.400 4.400" stroke="#fff" strokeWidth="1.600" />
      </svg>
      <svg className="ml-[9px]" width="22" height="18" viewBox="0 0 22 18" fill="none" stroke="#fff" strokeWidth="1.200">
        <path d="M1 6h3l4-4v14l-4-4H1zM11 6.500c1.200 1.500 1.200 3.500 0 5M14 4.500c2.500 2.500 2.500 6.500 0 9M17 2c4 4 4 10 0 14" />
      </svg>
      <span className="ml-[12px] w-[32px] pt-px text-[14.5px] tracking-[-0.5px]">ENG</span>
      <div className="ml-[9px] w-[74px] whitespace-nowrap text-center text-[14.5px] leading-[23px] tracking-[-0.4px]">
        <div>9:30 AM</div>
        <div>9/25/2020</div>
      </div>
      <svg className="ml-[21px] mr-[13px] mt-1" width="32" height="32" viewBox="0 0 32 32">
        <path d="M0 1h20v17H10l-4 4v-4H0z" fill="#fff" />
        <path d="M4 5.500h12M4 9.500h12M4 13.500h9" stroke="#111" strokeWidth="1.300" />
        <circle cx="20.500" cy="20.500" r="10" fill="#2b2d30" stroke="#8a8a8a" />
        <text x="16.500" y="25.500" fontSize="14" fontWeight="700" fill="#fff">2</text>
      </svg>
      <div className="h-full w-[5px] border-l border-[#55585c]" />
    </div>
  </div>
);

/* ---------- application button ---------- */

const AppButton = () => (
  <div className="absolute left-[2px] top-[1px] flex h-[52px] w-[52px] items-center justify-center rounded-full border border-[#999] bg-[#f0f0f0]">
    <svg width="26" height="26" viewBox="0 0 26 26">
      <path fill="#ff7048" d="M0 0h26v26H0z" />
      <path d="M13 0h10l-4 13-8-2z" fill="#1fdc3c" />
      <path d="M22 0h4v14L16 12z" fill="#5af5e0" />
      <path d="M0 7 26 16v-3L10 12z" fill="#20e8ff" />
      <path d="M0 8l11 6L6 26H0z" fill="#ff4f7c" />
      <path d="M9 14l4 12H5z" fill="#ff5a20" />
      <path d="M9 13l17 13H12z" fill="#22d84a" />
      <path d="M9 13l17 13v-5z" fill="#30e8f0" />
      <path d="M9 13.500 26 16v8z" fill="#0018c8" />
      <path d="M0 6v3l9 5 2-2z" fill="#00d8d0" />
    </svg>
  </div>
);

export default function App() {
  return (
    <div className="relative h-[1200px] w-[1920px] overflow-hidden bg-[#f0f0f0] font-['Noto_Sans',sans-serif] text-black">
      <TitleBar />
      <MenuTabs />
      <Ribbon />
      <div className="h-[2px] border-t border-white bg-[#c0c0c0]" />
      <SectionView />
      <SectionToolbar />
      <StatusBar />
      <Taskbar />
      <AppButton />
    </div>
  );
}
